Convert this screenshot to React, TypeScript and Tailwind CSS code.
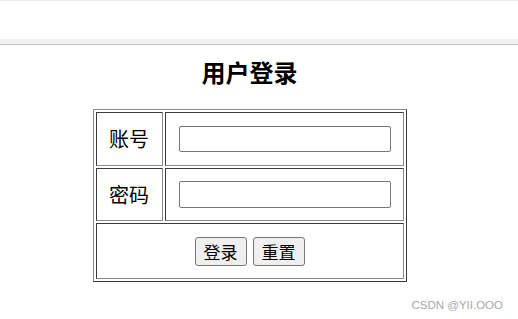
import React from "react";

const cjk = { fontFamily: '"Noto Sans CJK SC", "Noto Sans", sans-serif' };

export default function App() {
  return (
    <div className="relative w-[518px] h-[319px] bg-white overflow-hidden" style={cjk}>
      <div className="flex flex-col h-[45px]">
        <div className="h-px bg-[#ebebeb]" />
        <div className="h-[38px] bg-white" />
        <div className="h-[5px] bg-[#f2f2f2]" />
        <div className="h-px bg-[#c2c2c2]" />
      </div>
      <div className="w-[499px] flex flex-col items-center">
        <h2 className="mt-[10px] text-[24px] leading-[34px] font-bold text-black">用户登录</h2>
        <table
          className="mt-[20px] border-separate border-spacing-[2px] border border-t-[#8a8a8a] border-l-[#8a8a8a] border-r-[#3a3a3a] border-b-[#3a3a3a]"
        >
          <tbody>
            <tr>
              <td className="w-[67px] h-[54px] p-0 text-center text-[20px] text-black border border-t-[#3a3a3a] border-l-[#3a3a3a] border-r-[#8a8a8a] border-b-[#8a8a8a]">
                账号
              </td>
              <td className="w-[239px] h-[54px] pl-[13px] pr-[12px] py-0 border border-t-[#3a3a3a] border-l-[#3a3a3a] border-r-[#8a8a8a] border-b-[#8a8a8a]">
                <input
                  type="text"
                  className="block w-[212px] h-[26px] border border-[#767676] rounded-[2px] bg-white px-1 text-[14px] outline-none"
                />
              </td>
            </tr>
            <tr>
              <td className="w-[67px] h-[53px] p-0 text-center text-[20px] text-black border border-t-[#3a3a3a] border-l-[#3a3a3a] border-r-[#8a8a8a] border-b-[#8a8a8a]">
                密码
              </td>
              <td className="w-[239px] h-[53px] pl-[13px] pr-[12px] py-0 border border-t-[#3a3a3a] border-l-[#3a3a3a] border-r-[#8a8a8a] border-b-[#8a8a8a]">
                <input
                  type="password"
                  className="block w-[212px] h-[27px] border border-[#767676] rounded-[2px] bg-white px-1 text-[14px] outline-none"
                />
              </td>
            </tr>
            <tr>
              <td
                colSpan={2}
                className="h-[56px] p-0 border border-t-[#3a3a3a] border-l-[#3a3a3a] border-r-[#8a8a8a] border-b-[#8a8a8a]"
              >
                <div className="flex justify-center gap-[6px]">
                  <button className="w-[52px] h-[29px] flex items-center justify-center border border-[#767676] rounded-[3px] bg-[#efefef] text-[17px] leading-none text-black">
                    登录
                  </button>
                  <button className="w-[52px] h-[29px] flex items-center justify-center border border-[#767676] rounded-[3px] bg-[#efefef] text-[17px] leading-none text-black">
                    重置
                  </button>
                </div>
              </td>
            </tr>
          </tbody>
        </table>
      </div>
      <div
        className="absolute right-[15px] top-[298px] text-[11.5px] leading-[14px] text-[#a8a8a8]"
        style={{ fontFamily: '"Liberation Sans", Arial, sans-serif' }}
      >
        CSDN @YII.OOO
      </div>
    </div>
  );
}
